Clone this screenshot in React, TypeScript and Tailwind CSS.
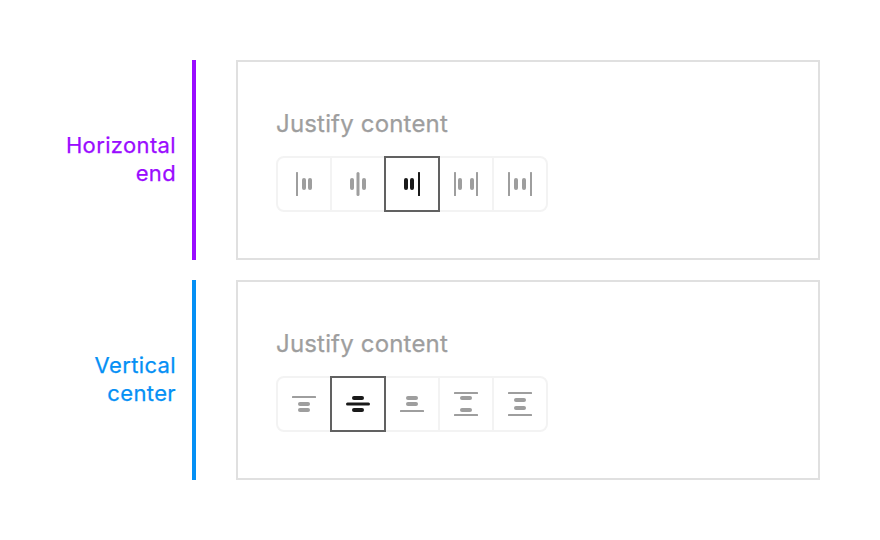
type Mode = 'start' | 'center' | 'end' | 'between' | 'around';

const shapes: Record<Mode, { lines: number[]; thick: number; bars: number[] }> = {
  start: { lines: [4], thick: 2, bars: [10, 16] },
  center: { lines: [10.5], thick: 3, bars: [4, 16] },
  end: { lines: [18], thick: 2, bars: [4, 10] },
  between: { lines: [0, 22], thick: 2, bars: [4, 16] },
  around: { lines: [0, 22], thick: 2, bars: [6, 14] },
};

const modes: Mode[] = ['start', 'center', 'end', 'between', 'around'];

function JustifyIcon({ mode, vertical }: { mode: Mode; vertical: boolean }) {
  const { lines, thick, bars } = shapes[mode];
  return (
    <svg width="24" height="24" viewBox="0 0 24 24" fill="currentColor">
      <g transform={vertical ? 'matrix(0 1 1 0 0 0)' : undefined}>
        {lines.map((x) => (
          <rect key={`l${x}`} x={x} y="0" width={thick} height="24" rx={thick === 3 ? 1.5 : 0.5} />
        ))}
        {bars.map((x) => (
          <rect key={`b${x}`} x={x} y="6" width="4" height="12" rx="2" />
        ))}
      </g>
    </svg>
  );
}

function Example({ label, tone, selected, vertical }: { label: string[]; tone: string; selected: Mode; vertical: boolean }) {
  return (
    <section className="flex h-[200px]">
      <div className={`flex w-[196px] flex-col items-end justify-center border-r-4 pr-4 pb-0.5 text-[22px] leading-7 tracking-[0.36px] [-webkit-text-stroke:0.25px_currentColor] ${tone}`}>
        {label.map((line) => (
          <span key={line}>{line}</span>
        ))}
      </div>
      <div className="ml-10 flex w-[584px] flex-col items-start border-2 border-[#e0e0e0] pt-[46px] pl-[38px]">
        <div className="h-8 text-2xl leading-8 tracking-[0.18px] text-[#9e9e9e] [-webkit-text-stroke:0.25px_currentColor]">Justify content</div>
        <div className="mt-4 flex">
          {modes.map((mode) => (
            <button
              key={mode}
              type="button"
              aria-label={mode}
              className={`-mr-0.5 flex size-14 items-center justify-center border-2 ${
                mode === selected
                  ? 'relative z-10 border-[#616161] text-[#1a1a1a]'
                  : 'border-[#f3f3f3] text-[#9e9e9e] first:rounded-l-lg last:rounded-r-lg'
              }`}
            >
              <JustifyIcon mode={mode} vertical={vertical} />
            </button>
          ))}
        </div>
      </div>
    </section>
  );
}

export default function App() {
  return (
    <main className="flex h-[540px] w-[880px] flex-col gap-5 bg-white pt-[60px] font-['Inter',sans-serif]">
      <Example label={['Horizontal', 'end']} tone="border-[#9a0cff] text-[#9a0cff]" selected="end" vertical={false} />
      <Example label={['Vertical', 'center']} tone="border-[#0590f5] text-[#0590f5]" selected="center" vertical />
    </main>
  );
}
